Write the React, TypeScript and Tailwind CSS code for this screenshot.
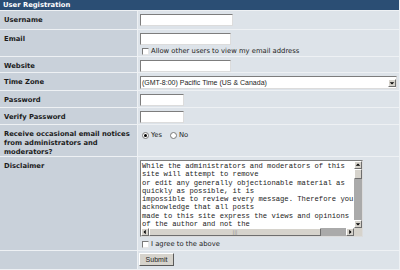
import React from 'react';

const disclaimer = [
    'While the administrators and moderators of this',
    'site will attempt to remove',
    'or edit any generally objectionable material as',
    'quickly as possible, it is',
    'impossible to review every message. Therefore you',
    'acknowledge that all posts',
    'made to this site express the views and opinions',
    'of the author and not the',
];

const Box: React.FC = () => (
    <span className="block w-[7px] h-[7px] bg-white border border-t-[#7a7a7a] border-l-[#7a7a7a] border-r-[#e6e6e6] border-b-[#e6e6e6] mr-[2px] shrink-0" />
);

const Radio: React.FC<{ on?: boolean }> = ({ on }) => (
    <span className="flex items-center justify-center w-[7px] h-[7px] rounded-full bg-white border border-[#7a7a7a] mr-[2px] shrink-0">
        {on && <span className="w-[3px] h-[3px] rounded-full bg-black" />}
    </span>
);

const Field: React.FC<{ w: string }> = ({ w }) => (
    <div className={`${w} h-[12px] bg-white border border-t-[#7d7d7d] border-l-[#7d7d7d] border-r-[#dcdcdc] border-b-[#dcdcdc]`} />
);

const Row: React.FC<{ label: React.ReactNode; h: string; children?: React.ReactNode }> = ({ label, h, children }) => (
    <div className={`flex gap-px ${h}`}>
        <div className="w-[137px] shrink-0 bg-[#c9d1da] pl-[4px] pt-[5px] text-[6.8px] leading-[9px] font-bold text-[#1c1c1c]">
            {label}
        </div>
        <div className="flex-1 bg-[#dde3e9] pl-[2px] pt-[3px]">{children}</div>
    </div>
);

const ArrowBtn: React.FC<{ dir: 'up' | 'down' | 'left' | 'right' }> = ({ dir }) => {
    const pts = {
        up: '1,5 4,2 7,5',
        down: '1,3 4,6 7,3',
        left: '5,1 2,4 5,7',
        right: '3,1 6,4 3,7',
    }[dir];
    return (
        <div className="w-[8px] h-[8px] bg-[#d6d3cc] border border-t-white border-l-white border-r-[#6e6e6e] border-b-[#6e6e6e] flex items-center justify-center shrink-0">
            <svg width="6" height="6" viewBox="0 0 8 8" className="block">
                <polygon points={pts} fill="#000" />
            </svg>
        </div>
    );
};

export default function App() {
    return (
        <div className="w-[400px] h-[270px] overflow-hidden bg-[#eef1f4] font-['DejaVu_Sans',sans-serif] text-[#1c1c1c]">
            <div className="flex flex-col gap-px w-[399px]">
                <div className="h-[10px] bg-[#2b4e74] text-white font-bold text-[6.8px] leading-[10px] pl-[3px]">
                    User Registration
                </div>

                <Row label="Username" h="h-[18px]">
                    <Field w="w-[93px]" />
                </Row>

                <Row label="Email" h="h-[26px]">
                    <Field w="w-[91px]" />
                    <div className="flex items-center mt-[2px] pl-[2px] text-[6.8px] leading-[8px]">
                        <Box />
                        Allow other users to view my email address
                    </div>
                </Row>

                <Row label="Website" h="h-[15px]">
                    <Field w="w-[91px]" />
                </Row>

                <Row label="Time Zone" h="h-[17px]">
                    <div className="w-[257px] h-[13px] bg-white border border-t-[#7d7d7d] border-l-[#7d7d7d] border-r-[#dcdcdc] border-b-[#dcdcdc] flex items-center">
                        <span className="flex-1 pl-[1px] font-['Liberation_Sans',Arial,sans-serif] text-[7px] leading-[8px]">
                            (GMT-8:00) Pacific Time (US &amp; Canada)
                        </span>
                        <ArrowBtn dir="down" />
                    </div>
                </Row>

                <Row label="Password" h="h-[16px]">
                    <Field w="w-[44px]" />
                </Row>

                <Row label="Verify Password" h="h-[16px]">
                    <Field w="w-[44px]" />
                </Row>

                <Row
                    label={
                        <>
                            Receive occasional email notices
                            <br />
                            from administrators and
                            <br />
                            moderators?
                        </>
                    }
                    h="h-[31px]"
                >
                    <div className="flex items-center pl-[2px] pt-[3px] text-[6.8px] leading-[8px]">
                        <Radio on />
                        <span className="mr-[8px]">Yes</span>
                        <Radio />
                        <span>No</span>
                    </div>
                </Row>

                <Row label="Disclaimer" h="h-[93px]">
                    <div className="w-[223px] h-[77px] bg-white border border-t-[#7d7d7d] border-l-[#7d7d7d] border-r-[#dcdcdc] border-b-[#dcdcdc] flex flex-col">
                        <div className="flex flex-1 min-h-0">
                            <div className="flex-1 overflow-hidden pl-[1px] pt-[1px] font-['Liberation_Mono',monospace] text-[7.2px] leading-[8.3px] whitespace-pre">
                                {disclaimer.join('\n')}
                            </div>
                            <div className="w-[8px] flex flex-col bg-[#aaaaaa]">
                                <ArrowBtn dir="up" />
                                <div className="h-[10px] bg-[#d6d3cc] border border-t-white border-l-white border-r-[#6e6e6e] border-b-[#6e6e6e]" />
                                <div className="flex-1" />
                                <ArrowBtn dir="down" />
                            </div>
                        </div>
                        <div className="h-[8px] flex bg-[#aaaaaa]">
                            <ArrowBtn dir="left" />
                            <div className="w-[172px] bg-[#d6d3cc] border border-t-white border-l-white border-r-[#6e6e6e] border-b-[#6e6e6e] flex items-center justify-center">
                                <span className="text-[5px] leading-[5px] text-[#8a8a8a]">|||</span>
                            </div>
                            <div className="flex-1" />
                            <ArrowBtn dir="right" />
                            <div className="w-[8px] bg-[#d6d3cc]" />
                        </div>
                    </div>
                    <div className="flex items-center mt-[3px] pl-[2px] text-[6.8px] leading-[8px]">
                        <Box />
                        I agree to the above
                    </div>
                </Row>

                <div className="flex gap-px h-[18px]">
                    <div className="w-[137px] shrink-0 bg-[#c9d1da]" />
                    <div className="flex-1 bg-[#dde3e9] pl-[1px] pt-[2px]">
                        <button className="block w-[35px] h-[13px] bg-[#d6d3cc] border border-t-white border-l-white border-r-[#5a5a5a] border-b-[#5a5a5a] font-['Liberation_Sans',Arial,sans-serif] text-[7px] leading-[8px] text-[#1c1c1c]">
                            Submit
                        </button>
                    </div>
                </div>
            </div>
        </div>
    );
}
